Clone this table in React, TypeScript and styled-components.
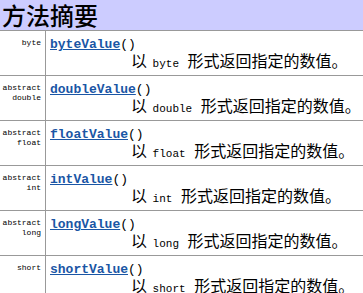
import { createGlobalStyle, styled } from "styled-components";

const GlobalStyle = createGlobalStyle`
  html, body {
    margin: 0;
    padding: 0;
    background: #fff;
    overflow: hidden;
  }
`;

const Summary = styled.div`
  width: 363px;
  font-family: "Noto Sans CJK SC", sans-serif;
  color: #000;
`;

const Heading = styled.div`
  height: 30px;
  padding-left: 2px;
  background: #ccccff;
  font-size: 24px;
  font-weight: 500;
  line-height: 30px;
`;

const Row = styled.div`
  display: grid;
  grid-template-columns: 46px 1fr;
  height: 45px;
  box-sizing: border-box;
  border-top: 1px solid #999;
  overflow: hidden;
`;

const TypeCell = styled.div`
  border-right: 1px solid #999;
  padding: 7px 4px 0 0;
  text-align: right;
  font-family: "Liberation Mono", monospace;
  font-size: 8px;
  line-height: 10px;
`;

const MethodCell = styled.div`
  padding: 7px 0 0 4px;
  white-space: nowrap;
`;

const Signature = styled.div`
  font-family: "Liberation Mono", monospace;
  font-size: 13px;
  line-height: 14px;
`;

const MethodLink = styled.a`
  color: #1a56a5;
  font-weight: bold;
  text-decoration: underline;
`;

const Description = styled.div`
  padding-left: 81px;
  height: 17px;
  font-size: 16px;
  line-height: 17px;
`;

const Code = styled.code`
  font-family: "Liberation Mono", monospace;
  font-size: 11px;
  line-height: 1;
  margin: 0 5px 0 2px;
`;

type Method = { abstract: boolean; type: string; name: string };

const methods: Method[] = [
  { abstract: false, type: "byte", name: "byteValue" },
  { abstract: true, type: "double", name: "doubleValue" },
  { abstract: true, type: "float", name: "floatValue" },
  { abstract: true, type: "int", name: "intValue" },
  { abstract: true, type: "long", name: "longValue" },
  { abstract: false, type: "short", name: "shortValue" },
];

const App = () => {
  return (
    <>
      <GlobalStyle />
      <Summary>
        <Heading>方法摘要</Heading>
        {methods.map((m) => (
          <Row key={m.name}>
            <TypeCell>
              {m.abstract && (
                <>
                  abstract
                  <br />
                </>
              )}
              {m.type}
            </TypeCell>
            <MethodCell>
              <Signature>
                <MethodLink href="#">{m.name}</MethodLink>()
              </Signature>
              <Description>
                以 <Code>{m.type}</Code> 形式返回指定的数值。
              </Description>
            </MethodCell>
          </Row>
        ))}
      </Summary>
    </>
  );
};

export default App;
